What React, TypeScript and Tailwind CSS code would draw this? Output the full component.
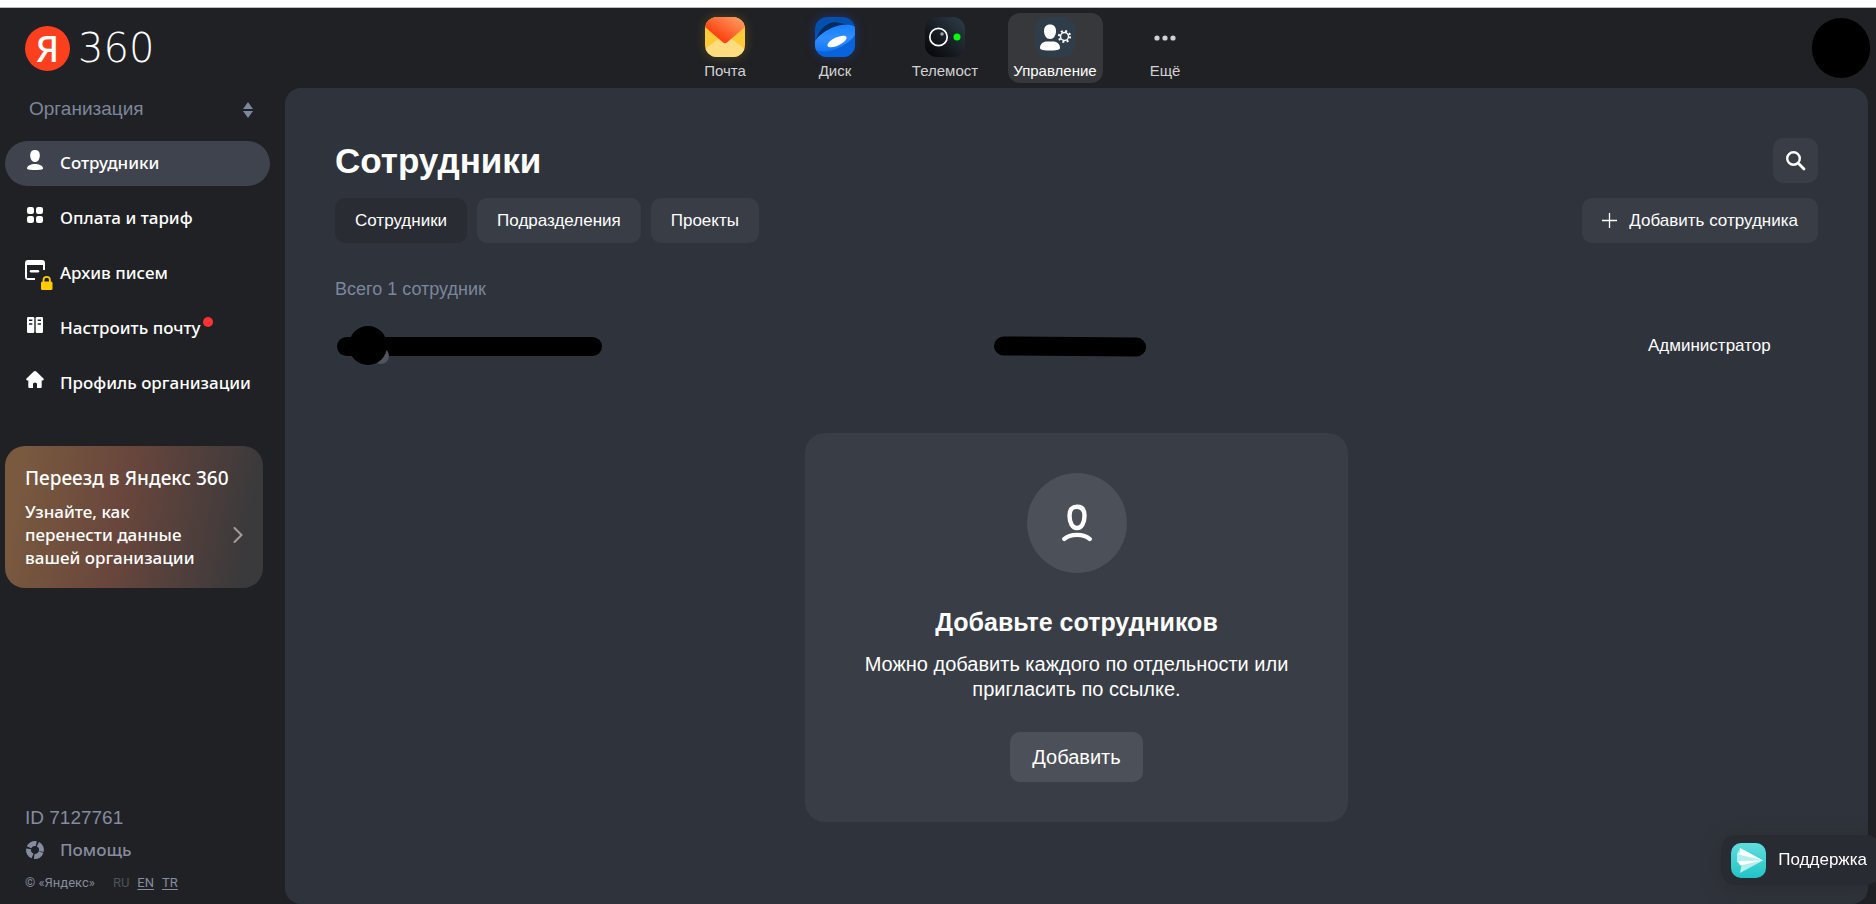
import type { ReactNode } from "react";

interface NavItem {
  label: string;
  icon: ReactNode;
  active?: boolean;
  dot?: boolean;
}

function MailIcon() {
  return (
    <svg viewBox="0 0 40 40" className="size-10 shrink-0 rounded-xl shadow-[0_0_12px_rgba(255,204,51,0.2)]">
      <defs>
        <linearGradient id="mail-flap" x1="0" y1="1" x2="1" y2="0">
          <stop offset="0.3" stopColor="#ff4514" />
          <stop offset="1" stopColor="#ffa66b" />
        </linearGradient>
      </defs>
      <rect width="40" height="40" fill="#ffca37" />
      <path d="M0 40V32L20 17L40 32V40Z" fill="#ffdc80" />
      <path d="M0 0H40V10L22 25.500Q20 27 18 25.500L0 10Z" fill="url(#mail-flap)" />
    </svg>
  );
}

function DiskIcon() {
  return (
    <svg viewBox="0 0 40 40" className="size-10 shrink-0 rounded-xl shadow-[0_0_12px_rgba(50,90,255,0.3)]">
      <defs>
        <linearGradient id="disk-body" x1="0" y1="1" x2="1" y2="0">
          <stop offset="0" stopColor="#0a6cf0" />
          <stop offset="0.5" stopColor="#2f8fff" />
          <stop offset="1" stopColor="#0d76ff" />
        </linearGradient>
      </defs>
      <rect width="40" height="40" fill="#0350b0" />
      <path d="M0 30L40 12V40H0Z" fill="#0864dc" />
      <path d="M1 23C5 10 15 3 25 6C30 7 33 8 38 8L20 16Z" fill="#032b5c" />
      <ellipse cx="20" cy="21" rx="23" ry="10.500" transform="rotate(-25 20 21)" fill="url(#disk-body)" />
      <ellipse cx="22" cy="24.500" rx="10.500" ry="4" transform="rotate(-25 22 24.500)" fill="#fff" />
    </svg>
  );
}

function TelemostIcon() {
  return (
    <svg viewBox="0 0 40 40" className="size-10 shrink-0 rounded-xl">
      <defs>
        <linearGradient id="telemost-bg" x1="0" y1="1" x2="1" y2="0">
          <stop offset="0.1" stopColor="#08090b" />
          <stop offset="1" stopColor="#2f3d4a" />
        </linearGradient>
      </defs>
      <rect width="40" height="40" fill="url(#telemost-bg)" />
      <circle cx="13.500" cy="20" r="8.700" fill="none" stroke="#fff" strokeWidth="1.700" />
      <circle cx="17" cy="17" r="1.700" fill="#a3a8ad" />
      <circle cx="32" cy="20" r="3.500" fill="#0f0" />
    </svg>
  );
}

function AdminIcon() {
  return (
    <svg viewBox="0 0 40 40" className="size-10 shrink-0 rounded-xl">
      <rect width="40" height="40" fill="#2f3d4b" />
      <path d="M15 7.500C19 7.500 21 10 21 14C21 18.500 18.500 22 15 22C11.500 22 9 18.500 9 14C9 10 11 7.500 15 7.500Z" fill="#fff" />
      <path d="M5 31C5 27 8 24.500 12 24.500H18C22 24.500 25 27 25 31C25 33 20 33.500 15 33.500S5 33 5 31Z" fill="#fff" />
      <circle cx="29.500" cy="19.500" r="4" fill="none" stroke="#fff" strokeWidth="1.500" />
      <circle cx="29.500" cy="19.500" r="5.600" fill="none" stroke="#fff" strokeWidth="2" strokeDasharray="2 2.400" />
    </svg>
  );
}

function MoreIcon() {
  return (
    <svg viewBox="0 0 40 40" className="size-10 shrink-0" fill="#d2d2d3">
      <circle cx="12" cy="21" r="2.600" />
      <circle cx="20" cy="21" r="2.600" />
      <circle cx="28" cy="21" r="2.600" />
    </svg>
  );
}

const apps: NavItem[] = [
  { label: "Почта", icon: <MailIcon /> },
  { label: "Диск", icon: <DiskIcon /> },
  { label: "Телемост", icon: <TelemostIcon /> },
  { label: "Управление", icon: <AdminIcon />, active: true },
  { label: "Ещё", icon: <MoreIcon /> },
];

const menu: NavItem[] = [
  {
    label: "Сотрудники",
    active: true,
    icon: (
      <svg viewBox="0 0 20 20" className="size-5" fill="#fff">
        <path d="M10 0C13.500 0 14.800 2.200 14.800 5.500C14.800 9.300 12.800 12 10 12S5.200 9.300 5.200 5.500C5.200 2.200 6.500 0 10 0Z" />
        <path d="M2 18.500C2 15.500 6 14 10 14S18 15.500 18 18.500C18 19.600 14 20 10 20S2 19.600 2 18.500Z" />
      </svg>
    ),
  },
  {
    label: "Оплата и тариф",
    icon: (
      <svg viewBox="0 0 20 20" className="size-5" fill="#fff">
        <rect x="2" y="2" width="7" height="7" rx="2.200" />
        <rect x="11" y="2" width="7" height="7" rx="2.200" />
        <rect x="2" y="11" width="7" height="7" rx="2.200" />
        <rect x="11" y="11" width="7" height="7" rx="2.200" />
      </svg>
    ),
  },
  {
    label: "Архив писем",
    icon: (
      <svg viewBox="0 0 20 20" className="size-5 overflow-visible">
        <path d="M3 0H17Q20 0 20 3V10H18V5H2V18H10V20H3Q0 20 0 17V3Q0 0 3 0Z" fill="#fff" />
        <path d="M6 11.200H13" stroke="#fff" strokeWidth="2.400" strokeLinecap="round" />
        <rect x="16" y="21.500" width="11.500" height="8.500" rx="1.500" fill="#ffcc00" />
        <path d="M18.500 22V20a3.200 3.200 0 0 1 6.400 0V22" fill="none" stroke="#ffcc00" strokeWidth="1.800" />
      </svg>
    ),
  },
  {
    label: "Настроить почту",
    dot: true,
    icon: (
      <svg viewBox="0 0 20 20" className="size-5">
        <rect x="2" y="2" width="7.300" height="16" rx="1.200" fill="#fff" />
        <rect x="10.700" y="2" width="7.300" height="16" rx="1.200" fill="#fff" />
        <path d="M4 5.300h3.300M4 9h3.300M12.700 5.300h3.300M12.700 9h3.300" stroke="#202124" strokeWidth="1.500" />
      </svg>
    ),
  },
  {
    label: "Профиль организации",
    icon: (
      <svg viewBox="0 0 20 20" className="size-5" fill="#fff">
        <path d="M10 1Q10.700 1 11.300 1.500L18.700 8.700Q19.300 10.500 17.500 10.500H16.700V17Q16.700 18 15.700 18H12V14Q12 12.500 10 12.500T8 14V18H4.300Q3.300 18 3.300 17V10.500H2.500Q.7 10.500 1.300 8.700L8.700 1.500Q9.300 1 10 1Z" />
      </svg>
    ),
  },
];

const tabs = ["Сотрудники", "Подразделения", "Проекты"];

function Header() {
  return (
    <header className="flex h-20 shrink-0 items-center pr-1.5 pl-5">
      <div className="flex flex-1 items-center">
        <a href="#" aria-label="Яндекс 360" className="ml-[5px] flex items-center gap-2">
          <span className="flex size-[45px] items-center justify-center rounded-full bg-[#fc3f1d] font-['Noto_Sans'] text-4xl leading-[45px] font-medium">
            Я
          </span>
          <span className="font-['DejaVu_Sans'] text-[40px] leading-[45px] font-extralight">360</span>
        </a>
      </div>
      <nav className="flex gap-[15px]">
        {apps.map((app) => (
          <a
            key={app.label}
            href="#"
            className={`flex h-[70px] w-[95px] flex-col items-center rounded-xl pt-1 text-[15px] leading-7 ${
              app.active ? "bg-[#37383b] text-white" : "text-[#d2d2d3]"
            }`}
          >
            {app.icon}
            {app.label}
          </a>
        ))}
      </nav>
      <div className="flex flex-1 justify-end">
        <button aria-label="Аккаунт" className="h-[60px] w-[58px] rounded-full bg-black" />
      </div>
    </header>
  );
}

function Sidebar() {
  return (
    <aside className="flex w-[285px] shrink-0 flex-col pl-[5px]">
      <button className="flex h-[43px] items-center justify-between pr-8 pl-6 text-[19px] text-[#7c869d]">
        Организация
        <svg viewBox="0 0 10 16" className="h-4 w-2.5" fill="#7c869d">
          <path d="M5 0L10 7H0Z" />
          <path d="M5 16L10 9H0Z" />
        </svg>
      </button>

      <nav className="mt-2.5 flex flex-col gap-2.5">
        {menu.map((item) => (
          <a
            key={item.label}
            href="#"
            className={`mr-[15px] flex h-[45px] items-center gap-[15px] rounded-full pl-5 font-['Noto_Sans'] text-[17px] font-medium ${
              item.active ? "bg-[#3f434d]" : ""
            }`}
          >
            <span className="pb-2">{item.icon}</span>
            <span className="relative pb-0.5">
              {item.label}
              {item.dot && <span className="absolute top-0.5 left-full ml-0.5 size-2.5 rounded-full bg-[#ff3333]" />}
            </span>
          </a>
        ))}
      </nav>

      <a
        href="#"
        className="mt-10 mr-[22px] flex flex-col rounded-[20px] bg-[linear-gradient(100deg,#7a5a3f_5%,#69463c_45%,#3a393b_92%)] px-5 pt-[18px] pb-[19px] font-['Noto_Sans']"
      >
        <span className="text-[19px] leading-7 font-medium">Переезд в Яндекс 360</span>
        <span className="mt-2 flex items-center justify-between">
          <span className="text-[17px] leading-[23px] font-medium">
            Узнайте, как
            <br />
            перенести данные
            <br />
            вашей организации
          </span>
          <svg viewBox="0 0 10 16" className="h-4 w-2.5" fill="none" stroke="#a39d9c" strokeWidth="2" strokeLinecap="round">
            <path d="M1.500 1L8.500 8L1.500 15" />
          </svg>
        </span>
      </a>

      <footer className="mt-auto flex flex-col pb-3 pl-5 text-[#868c9f]">
        <span className="text-[19px] leading-7">ID 7127761</span>
        <a href="#" className="mt-0.5 flex items-center gap-[15px] font-['Noto_Sans'] text-[17px] leading-8 font-medium">
          <svg viewBox="0 0 20 20" className="size-5" fill="none" stroke="#868c9f" strokeWidth="5">
            <circle cx="10" cy="10" r="6.500" strokeDasharray="8.400 1.810" transform="rotate(20 10 10)" />
          </svg>
          Помощь
        </a>
        <div className="mt-2 flex gap-2 font-['Roboto'] text-[13px] leading-[18px]">
          <span className="mr-2.5">© «Яндекс»</span>
          <span className="text-[#4f535e]">RU</span>
          <a href="#" className="underline underline-offset-2">EN</a>
          <a href="#" className="underline underline-offset-2">TR</a>
        </div>
      </footer>
    </aside>
  );
}

function EmployeesTable() {
  return (
    <table className="mt-[18px] w-full table-fixed text-left text-[17px]">
      <tbody>
        <tr className="h-[54px]">
          <td className="w-[44%] pl-0.5">
            <div className="relative flex h-10 items-center">
              <span className="h-[19px] w-[265px] rounded-full bg-black" />
              <span className="absolute top-[22px] left-9 size-4 rounded-full bg-[#4f545e]" />
              <span className="absolute top-0 left-3 h-[39px] w-[38px] rounded-full bg-black" />
            </div>
          </td>
          <td className="w-[44%] pl-1.5">
            <div className="h-[19px] w-[152px] rotate-[0.5deg] rounded-full bg-black" />
          </td>
          <td className="pl-2">Администратор</td>
        </tr>
      </tbody>
    </table>
  );
}

function EmptyCard() {
  return (
    <section className="mx-auto mt-[60px] flex w-[543px] flex-col items-center rounded-[20px] bg-[#393d45] px-10 py-10 text-center">
      <div className="flex size-[100px] items-center justify-center rounded-full bg-[#4c5058]">
        <svg viewBox="0 0 30 38" className="h-[38px] w-[30px]" fill="none" stroke="#fff" strokeWidth="4.400" strokeLinecap="round">
          <path d="M15 2.800C19.500 2.800 22.500 5 22.500 11.500C22.500 19 19.500 24 15 24S7.500 19 7.500 11.500C7.500 5 10.500 2.800 15 2.800Z" />
          <path d="M2.300 35C8 29.500 22 29.500 27.700 35" />
        </svg>
      </div>
      <h2 className="mt-[33px] text-[25px] leading-8 font-bold">Добавьте сотрудников</h2>
      <p className="mt-3.5 text-xl leading-[25px]">Можно добавить каждого по отдельности или пригласить по ссылке.</p>
      <button className="mt-[30px] h-[50px] rounded-[10px] bg-[#4c5058] px-[22px] text-xl">Добавить</button>
    </section>
  );
}

function SupportButton() {
  return (
    <button className="fixed right-[-5px] bottom-[19px] flex h-[50px] items-center gap-3 rounded-[15px] bg-[#292b32] pr-3.5 pl-2.5 text-[17px] shadow-[0_4px_20px_rgba(32,33,36,0.35)]">
      <svg viewBox="0 0 35 35" className="size-[35px]">
        <defs>
          <linearGradient id="support-bg" x1="0" y1="0" x2="0" y2="1">
            <stop offset="0" stopColor="#5fdede" />
            <stop offset="1" stopColor="#22c4c6" />
          </linearGradient>
        </defs>
        <rect width="35" height="35" rx="10" fill="url(#support-bg)" />
        <path d="M9 5L32 17.500L9 30L10.500 22L6 19V11Z" fill="#b4efef" />
        <path d="M9 5L32 17.500L6 11L9 10Z" fill="#fff" />
        <path d="M7 18L32 17.500L9 22.500Z" fill="#fff" />
      </svg>
      Поддержка
    </button>
  );
}

export default function App() {
  return (
    <div className="flex min-h-screen flex-col border-t-[7px] border-white bg-[#202124] font-['Liberation_Sans',sans-serif] text-white">
      <div className="h-px shrink-0 bg-[#bcbcbd]" />
      <Header />
      <div className="flex grow">
        <Sidebar />
        <main className="mr-2 grow rounded-2xl bg-[#2f333b] px-[50px] pt-[50px] pb-[50px]">
          <div className="flex items-center justify-between">
            <h1 className="text-[35px] leading-[45px] font-bold">Сотрудники</h1>
            <button aria-label="Поиск" className="flex size-[45px] items-center justify-center rounded-[10px] bg-[#393d45]">
              <svg viewBox="0 0 20 20" className="size-5" fill="none" stroke="#fff" strokeWidth="2.400">
                <circle cx="7.500" cy="7.500" r="6.300" />
                <path d="M12.300 12.300L18 18" strokeWidth="2.800" strokeLinecap="round" />
              </svg>
            </button>
          </div>

          <div className="mt-[15px] flex items-center justify-between text-[17px]">
            <div className="flex gap-2.5">
              {tabs.map((tab, index) => (
                <button
                  key={tab}
                  className={`h-[45px] rounded-[10px] px-5 ${index === 0 ? "bg-[#2a2c34]" : "bg-[#393d45]"}`}
                >
                  {tab}
                </button>
              ))}
            </div>
            <button className="flex h-[45px] items-center gap-3 rounded-[10px] bg-[#393d45] px-5">
              <svg viewBox="0 0 15 15" className="size-[15px]" stroke="#fff" strokeWidth="1.300">
                <path d="M7.500 0V15M0 7.500H15" />
              </svg>
              Добавить сотрудника
            </button>
          </div>

          <p className="mt-[34px] text-lg leading-6 text-[#7c869d]">Всего 1 сотрудник</p>
          <EmployeesTable />
          <EmptyCard />
        </main>
      </div>
      <SupportButton />
    </div>
  );
}
